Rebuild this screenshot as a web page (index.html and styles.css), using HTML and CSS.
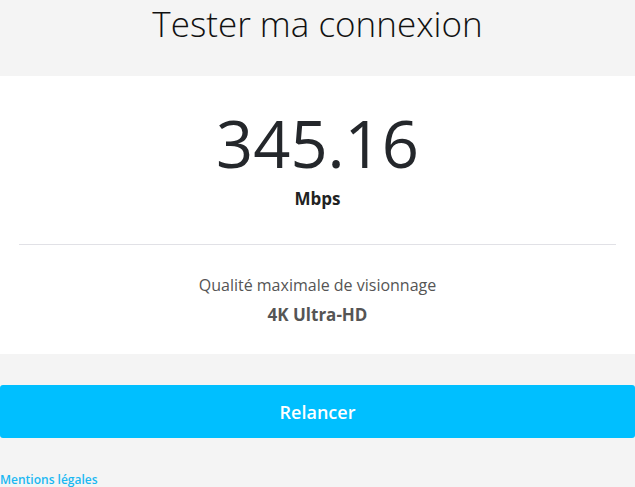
FILE: index.html
```html
<!doctype html>
<html>
<head>
<meta charset="utf-8">
<title>Tester ma connexion</title>
<link rel="stylesheet" href="styles.css">
</head>
<body>
	<div class="page">
		<h1 class="title">Tester ma connexion</h1>
		<div class="result">
			<div class="speed">345.16</div>
			<div class="unit">Mbps</div>
			<hr class="sep">
			<div class="label">Qualité maximale de visionnage</div>
			<div class="quality">4K Ultra-HD</div>
		</div>
		<button class="retry">Relancer</button>
		<a class="legal" href="#">Mentions légales</a>
	</div>
</body>
</html>
```
FILE: styles.css
```css
*{margin:0; padding:0; box-sizing:border-box;}
body{background:#f4f4f4; font-family:"Open Sans", "Noto Sans", sans-serif; color:#222;}
.page{display:flex; flex-direction:column;}
.title{height:76px; font-size:35px; font-weight:300; text-align:center; color:#111; line-height:48px;}
.result{background:#fff; padding:23px 19px 0; height:278px; text-align:center;}
.speed{font-size:65px; line-height:88px; color:#24272b;}
.unit{font-size:17px; font-weight:700; color:#222; line-height:22px; margin-top:1px;}
.sep{border:0; border-top:1px solid #e1e1e6; margin:34px 0 0;}
.label{font-size:16px; color:#555; margin-top:29px; line-height:22px;}
.quality{font-size:17px; font-weight:700; color:#555; margin-top:7px; line-height:24px;}
.retry{margin-top:31px; height:53px; border:0; border-radius:3px; background:#00bfff; color:#fff; font-family:inherit; font-size:18px; font-weight:600; width:100%;}
.legal{margin-top:34px; font-size:12px; font-weight:600; color:#1ab8f2; text-decoration:none; line-height:16px;}
```
